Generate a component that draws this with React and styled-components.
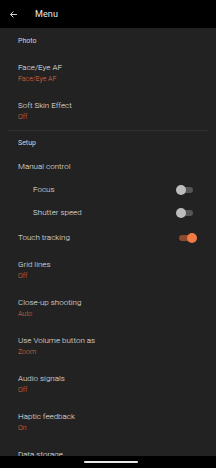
import React from "react";
import styled, { createGlobalStyle } from "styled-components";

const GlobalStyle = createGlobalStyle`
  html, body {
    margin: 0;
    padding: 0;
    background: #000;
  }
  body {
    font-family: Roboto, "Noto Sans", "Liberation Sans", sans-serif;
    -webkit-font-smoothing: antialiased;
  }
`;

const Screen = styled.div`
  width: 216px;
  height: 468px;
  display: flex;
  flex-direction: column;
  background: #222222;
  overflow: hidden;
`;

const TopBar = styled.div`
  height: 28px;
  flex-shrink: 0;
  background: #000;
  display: flex;
  align-items: center;
  padding-left: 9px;
  gap: 17px;
  color: #ececec;
`;

const Title = styled.div`
  font-size: 9px;
  font-weight: 400;
  letter-spacing: 0.1px;
`;

const List = styled.div`
  flex: 1;
  overflow: hidden;
  display: flex;
  flex-direction: column;
`;

const SectionLabel = styled.div`
  height: ${(p) => p.h}px;
  padding-left: 18px;
  display: flex;
  align-items: center;
  font-size: 7px;
  font-weight: 400;
  color: #d2d2d2;
  flex-shrink: 0;
`;

const Divider = styled.div`
  height: 1px;
  margin: 0 8px;
  background: #2f2f2f;
  flex-shrink: 0;
`;

const Row = styled.div`
  height: ${(p) => p.h}px;
  padding-left: ${(p) => (p.indent ? 33 : 18)}px;
  padding-right: 20px;
  display: flex;
  align-items: center;
  justify-content: space-between;
  flex-shrink: 0;
`;

const ItemRow = styled.div`
  height: 38px;
  box-sizing: border-box;
  padding: 9px 20px 0 18px;
  display: flex;
  flex-direction: column;
  gap: 3px;
  flex-shrink: 0;
`;

const ItemTitle = styled.div`
  font-size: 8px;
  line-height: 9px;
  font-weight: 300;
  color: #ececec;
`;

const ItemValue = styled.div`
  font-size: 7px;
  line-height: 9px;
  font-weight: 300;
  color: #e06c3d;
`;

const Track = styled.div`
  position: relative;
  width: 14px;
  height: 6px;
  border-radius: 3px;
  background: ${(p) => (p.on ? "#8c4a2f" : "#565656")};
  margin-right: 3px;
`;

const Knob = styled.div`
  position: absolute;
  top: -2px;
  left: ${(p) => (p.on ? 8 : -3)}px;
  width: 10px;
  height: 10px;
  border-radius: 50%;
  background: ${(p) => (p.on ? "#f07b45" : "#bdbdbd")};
`;

const NavBar = styled.div`
  height: 12px;
  flex-shrink: 0;
  background: #000;
  display: flex;
  align-items: center;
  justify-content: center;
`;

const Pill = styled.div`
  width: 54px;
  height: 2px;
  border-radius: 1px;
  background: #e8e8e8;
  margin-left: 6px;
`;

const BackArrow = () => (
  <svg width="9" height="9" viewBox="0 0 24 24" fill="none">
    <path
      d="M20 12H5M11 5l-7 7 7 7"
      stroke="#ececec"
      strokeWidth="2.4"
      strokeLinecap="round"
      strokeLinejoin="round"
    />
  </svg>
);

const Toggle = ({ on }) => (
  <Track on={on}>
    <Knob on={on} />
  </Track>
);

const Item = ({ title, value }) => (
  <ItemRow>
    <ItemTitle>{title}</ItemTitle>
    {value && <ItemValue>{value}</ItemValue>}
  </ItemRow>
);

const Switch = ({ title, on, indent, h = 23 }) => (
  <Row h={h} indent={indent}>
    <ItemTitle>{title}</ItemTitle>
    {on !== undefined && <Toggle on={on} />}
  </Row>
);

export default function App() {
  return (
    <Screen>
      <GlobalStyle />
      <TopBar>
        <BackArrow />
        <Title>Menu</Title>
      </TopBar>
      <List>
        <SectionLabel h={26}>Photo</SectionLabel>
        <Item title="Face/Eye AF" value="Face/Eye AF" />
        <Item title="Soft Skin Effect" value="Off" />
        <Divider />
        <SectionLabel h={24}>Setup</SectionLabel>
        <Switch title="Manual control" />
        <Switch title="Focus" indent on={false} />
        <Switch title="Shutter speed" indent on={false} />
        <Switch title="Touch tracking" on h={27} />
        <Item title="Grid lines" value="Off" />
        <Item title="Close-up shooting" value="Auto" />
        <Item title="Use Volume button as" value="Zoom" />
        <Item title="Audio signals" value="Off" />
        <Item title="Haptic feedback" value="On" />
        <Item title="Data storage" />
      </List>
      <NavBar>
        <Pill />
      </NavBar>
    </Screen>
  );
}
